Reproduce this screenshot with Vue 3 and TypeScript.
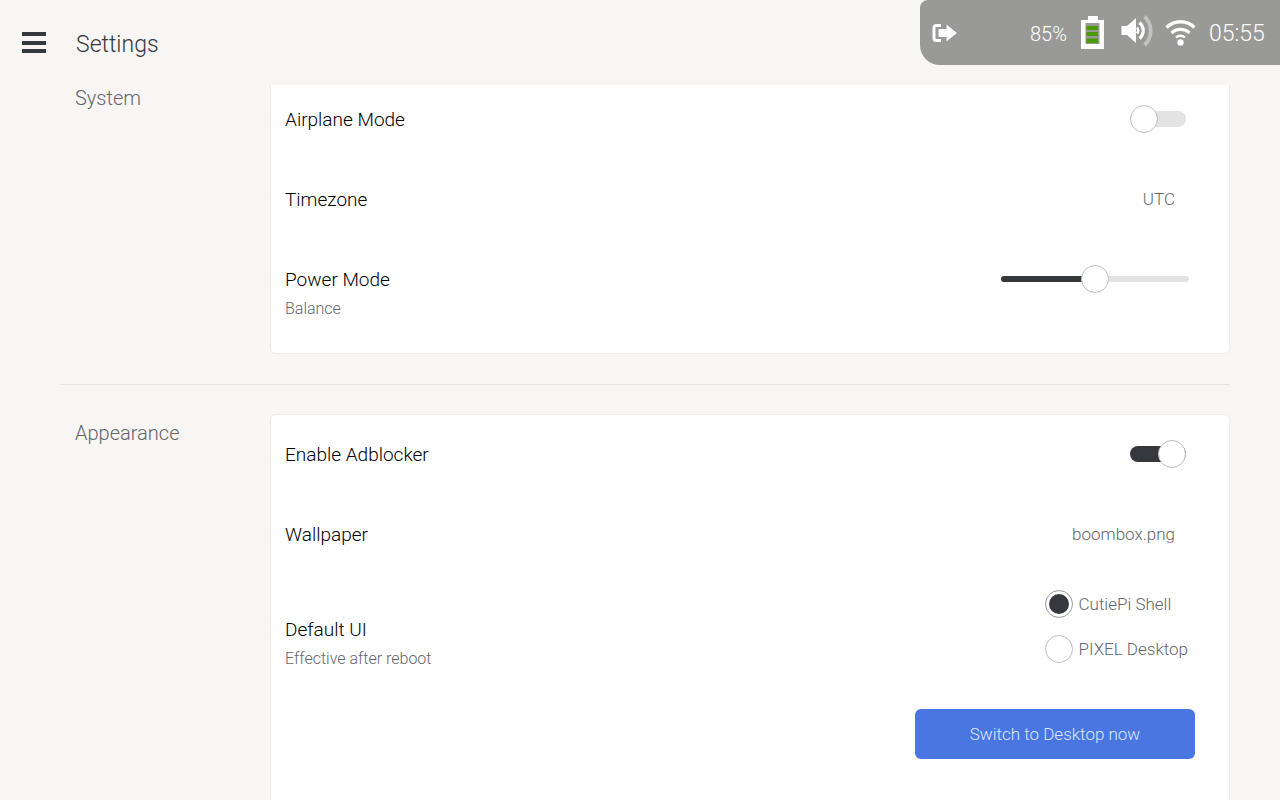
<script setup lang="ts">
interface Radio { label: string; on: boolean }
const radios: Radio[] = [
  { label: 'CutiePi Shell', on: true },
  { label: 'PIXEL Desktop', on: false },
]
</script>

<template>
  <div class="screen">
    <header class="topbar">
      <button class="burger" aria-label="Menu"><i></i><i></i><i></i></button>
      <h1 class="title">Settings</h1>
    </header>

    <aside class="status">
      <svg class="logout" width="26" height="20" viewBox="0 0 26 20">
        <path d="M9 2.500H4.600Q2 2.500 2 5v10q0 2.500 2.600 2.500H9" fill="none" stroke="#fff" stroke-width="3"/>
        <path d="M6.500 6h8V1.500L25 10 14.500 18.500V14h-8z" fill="#fff"/>
      </svg>
      <span class="pct">85%</span>
      <svg class="battery" width="24" height="34" viewBox="0 0 24 34">
        <path d="M8 1h10v4h6v29H1V5h7z" fill="#fff"/>
        <rect x="5.500" y="8" width="14" height="21" fill="#999997"/>
        <rect x="6.500" y="11" width="11.500" height="4" fill="#4a9a00"/>
        <rect x="6.500" y="17" width="11.500" height="4" fill="#4a9a00"/>
        <rect x="6.500" y="23.500" width="11.500" height="4.500" fill="#4a9a00"/>
      </svg>
      <svg class="volume" width="33" height="32" viewBox="0 0 33 32">
        <path d="M0.500 11h5.500l9-8v25l-9-8H0.500z" fill="#fff"/>
        <path d="M16 12.500a4.500 4.500 0 0 1 0 6" fill="none" stroke="#fff" stroke-width="2.600"/>
        <path d="M18.500 7.500a10.500 10.500 0 0 1 0 16" fill="none" stroke="#fff" stroke-width="3.200"/>
        <path d="M23.500 1.500a19.500 19.500 0 0 1 0 28.500" fill="none" stroke="#c2c2c1" stroke-width="3.800"/>
      </svg>
      <svg class="wifi" width="32" height="30" viewBox="0 0 32 30">
        <path d="M1.500 11.500a20 20 0 0 1 28 0" fill="none" stroke="#fff" stroke-width="3.400"/>
        <path d="M6.500 17a13 13 0 0 1 18 0" fill="none" stroke="#fff" stroke-width="3.400"/>
        <path d="M11 21.500a6.500 6.500 0 0 1 9 0" fill="none" stroke="#fff" stroke-width="2.400"/>
        <circle cx="15.500" cy="26.500" r="3.200" fill="#fff"/>
      </svg>
      <span class="clock">05:55</span>
    </aside>

    <main class="content">
      <section class="group">
        <h2 class="group-label">System</h2>
        <div class="card">
          <div class="row">
            <span class="name">Airplane Mode</span>
            <span class="toggle"><span class="knob"></span></span>
          </div>
          <div class="row">
            <span class="name">Timezone</span>
            <span class="value">UTC</span>
          </div>
          <div class="row power">
            <div>
              <div class="name">Power Mode</div>
              <div class="sub">Balance</div>
            </div>
            <span class="slider"><span class="fill"></span><span class="knob thumb"></span></span>
          </div>
        </div>
      </section>

      <hr class="divider" />

      <section class="group">
        <h2 class="group-label">Appearance</h2>
        <div class="card">
          <div class="row">
            <span class="name">Enable Adblocker</span>
            <span class="toggle on"><span class="knob"></span></span>
          </div>
          <div class="row">
            <span class="name">Wallpaper</span>
            <span class="value">boombox.png</span>
          </div>
          <div class="row ui">
            <div class="ui-left">
              <div class="name">Default UI</div>
              <div class="sub">Effective after reboot</div>
            </div>
            <div class="radios">
              <label v-for="r in radios" :key="r.label" class="radio">
                <span class="dot" :class="{ on: r.on }"></span>{{ r.label }}
              </label>
            </div>
          </div>
          <div class="actions">
            <button class="primary">Switch to Desktop now</button>
          </div>
        </div>
      </section>
    </main>
  </div>
</template>

<style>
html, body { margin: 0; background: #f7f6f5; }
</style>

<style scoped>
.screen {
  position: relative;
  width: 1280px;
  height: 800px;
  overflow: hidden;
  background: #f7f6f5;
  font-family: Roboto, sans-serif;
  font-weight: 300;
  color: #000;
}
.topbar {
  position: relative;
  z-index: 1;
  display: flex;
  align-items: center;
  height: 85px;
  box-sizing: border-box;
  padding-left: 22px;
  background: #f7f6f5;
}
.burger {
  display: flex;
  flex-direction: column;
  gap: 4.500px;
  width: 24px;
  padding: 0;
  border: 0;
  background: none;
}
.burger i { display: block; height: 4px; background: #35383c; }
.title {
  margin: 3px 0 0 30px;
  font-size: 23px;
  font-weight: 300;
  color: #35383c;
}
.status {
  position: absolute;
  z-index: 2;
  top: 0;
  right: 0;
  width: 360px;
  height: 65px;
  border-radius: 8px 0 0 20px;
  background: #999997;
  color: #fff;
}
.status > * { position: absolute; }
.logout { left: 12px; top: 23px; }
.pct { left: 110px; top: 21px; font-size: 20px; line-height: 26px; }
.battery { left: 160px; top: 15px; }
.volume { left: 201px; top: 15px; }
.wifi { left: 245px; top: 16px; }
.clock { left: 289px; top: 20px; font-size: 23px; line-height: 28px; }
.content {
  margin-top: -6px;
  padding: 0 50px 0 60px;
}
.group {
  display: grid;
  grid-template-columns: 210px 1fr;
  align-items: start;
}
.group-label {
  margin: 6px 0 0 15px;
  font-size: 20px;
  line-height: 26px;
  font-weight: 300;
  color: #63666a;
}
.card {
  box-sizing: border-box;
  padding: 0 14px;
  border: 1px solid #ebebea;
  border-radius: 6px;
  background: #fff;
}
.row {
  display: flex;
  align-items: center;
  justify-content: space-between;
  height: 80px;
}
.row:first-child { margin-top: -1px; }
.name { padding-top: 2px; font-size: 19px; line-height: 26px; }
.sub { margin-top: 5px; font-size: 16px; line-height: 22px; color: #63666a; }
.value { margin-right: 40px; font-size: 17px; color: #63666a; }
.power { height: 114px; align-items: flex-start; padding-top: 26px; box-sizing: border-box; }
.toggle {
  position: relative;
  width: 56px;
  height: 16px;
  margin-right: 29px;
  border-radius: 8px;
  background: #e3e3e3;
}
.toggle.on { background: #35383c; }
.knob {
  position: absolute;
  top: -6px;
  left: 0;
  box-sizing: border-box;
  width: 28px;
  height: 28px;
  border: 1px solid #bdbdbd;
  border-radius: 50%;
  background: #fff;
}
.toggle.on .knob { left: 28px; }
.slider {
  position: relative;
  width: 188px;
  height: 6px;
  margin: 11px 26px 0 0;
  border-radius: 3px;
  background: #e3e3e3;
}
.fill {
  position: absolute;
  inset: 0 auto 0 0;
  width: 94px;
  border-radius: 3px;
  background: #35383c;
}
.thumb { left: 80px; top: -11px; }
.ui { height: 135px; align-items: flex-start; }
.ui-left { margin-top: 41px; }
.radios { display: flex; flex-direction: column; gap: 17px; margin: 16px 27px 0 0; }
.radio {
  display: flex;
  align-items: center;
  gap: 6px;
  height: 28px;
  font-size: 17px;
  color: #63666a;
}
.dot {
  box-sizing: border-box;
  width: 28px;
  height: 28px;
  border: 1px solid #bdbdbd;
  border-radius: 50%;
  background: #fff;
}
.dot.on { border-color: #9a9a9a; padding: 3px; background: #35383c content-box; }
.actions { display: flex; justify-content: flex-end; height: 120px; padding-right: 20px; }
.primary {
  width: 280px;
  height: 50px;
  border: 0;
  border-radius: 6px;
  background: #4a76e2;
  color: #dfe6fb;
  font: 300 17px Roboto, sans-serif;
}
.divider {
  height: 1px;
  margin: 30px 0 29px;
  border: 0;
  background: #e4e3e2;
}
</style>
